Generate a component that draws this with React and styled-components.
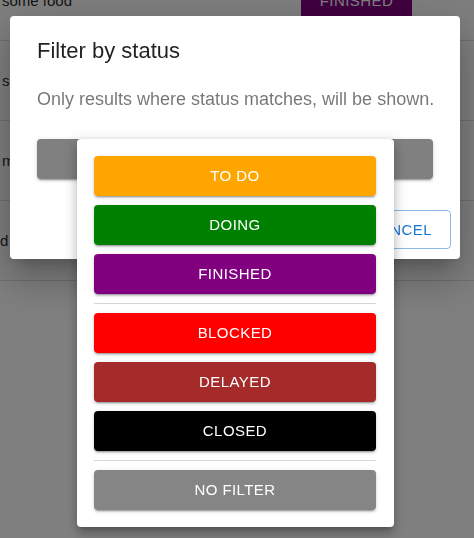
//IMPORTS
import React from 'react'
import styled, { createGlobalStyle } from 'styled-components'

//STYLE
const font = `"Liberation Sans", Arial, Helvetica, sans-serif`

const GlobalStyle = createGlobalStyle`
  html, body{
    margin: 0;
    padding: 0;
    width: 474px;
    height: 538px;
    overflow: hidden;
    background: #fff;
    font-family: ${font};
  }
`

const Page = styled.div`
  width: 474px;
  height: 538px;
  overflow: hidden;
`
const Table = styled.div`
  margin-top: -39px;
`
const Row = styled.div`
  display: flex;
  align-items: center;
  height: 80px;
  border-bottom: 1px solid #e0e0e0;
  box-sizing: border-box;
  padding-left: ${p => p.$indent}px;
  font-size: 15px;
  color: rgba(0,0,0,0.87);
`
const RowText = styled.div`
  flex: 1;
  white-space: nowrap;
`
const Chip = styled.div`
  width: 111px;
  height: 30px;
  margin-right: 62px;
  display: flex;
  align-items: center;
  justify-content: center;
  background: ${p => p.$bg};
  color: #fff;
  font-size: 15px;
  letter-spacing: 0.43px;
`

const Backdrop = styled.div`
  position: fixed;
  inset: 0;
  background: rgba(0,0,0,0.5);
  display: flex;
  align-items: flex-start;
  padding: 16px 0 0 10px;
`
const Dialog = styled.div`
  width: 450px;
  box-sizing: border-box;
  background: #fff;
  border-radius: 4px;
  padding: 19px 9px 10px 27px;
  box-shadow: 0px 11px 15px -7px rgba(0,0,0,0.2), 0px 24px 38px 3px rgba(0,0,0,0.14), 0px 9px 46px 8px rgba(0,0,0,0.12);
`
const Title = styled.h2`
  margin: 0;
  font-size: 22px;
  font-weight: 400;
  line-height: 32px;
  color: rgba(0,0,0,0.87);
`
const Subtitle = styled.p`
  margin: 19px 0 0;
  font-size: 18px;
  line-height: 27px;
  white-space: nowrap;
  color: rgba(0,0,0,0.54);
`
const SelectButton = styled.div`
  margin: 26px 18px 0 0;
  height: 40px;
  border-radius: 4px;
  background: #808080;
  box-shadow: 0px 3px 1px -2px rgba(0,0,0,0.2), 0px 2px 2px 0px rgba(0,0,0,0.14), 0px 1px 5px 0px rgba(0,0,0,0.12);
`
const Actions = styled.div`
  display: flex;
  justify-content: flex-end;
  margin-top: 31px;
`
const OutlinedButton = styled.button`
  height: 39px;
  padding: 0 18px;
  background: transparent;
  border: 1px solid rgba(25,118,210,0.5);
  border-radius: 4px;
  color: #1976d2;
  font-family: ${font};
  font-size: 15px;
  letter-spacing: 0.43px;
  text-transform: uppercase;
`

const Menu = styled.div`
  position: fixed;
  left: 77px;
  top: 139px;
  width: 317px;
  box-sizing: border-box;
  padding: 17px 18px 17px 17px;
  background: #fff;
  border-radius: 4px;
  display: flex;
  flex-direction: column;
  gap: 9px;
  box-shadow: 0px 5px 5px -3px rgba(0,0,0,0.2), 0px 8px 10px 1px rgba(0,0,0,0.14), 0px 3px 14px 2px rgba(0,0,0,0.12);
`
const StatusButton = styled.button`
  height: 40px;
  padding: 0 0 2px;
  border: none;
  border-radius: 4px;
  background: ${p => p.$bg};
  color: #fff;
  font-family: ${font};
  font-size: 15px;
  letter-spacing: 0.43px;
  text-transform: uppercase;
  box-shadow: 0px 3px 1px -2px rgba(0,0,0,0.2), 0px 2px 2px 0px rgba(0,0,0,0.14), 0px 1px 5px 0px rgba(0,0,0,0.12);
`
const Divider = styled.hr`
  margin: 0;
  border: none;
  height: 1px;
  background: #d6d6d6;
`

//DATA
const rows = [
  { text: 'some food', indent: 2, chip: { label: 'FINISHED', bg: '#800080' } },
  { text: 's', indent: 2 },
  { text: 'm', indent: 2 },
  { text: 'd', indent: 0 },
]

const groups = [
  [
    { label: 'To do', bg: '#ffa500' },
    { label: 'Doing', bg: '#008000' },
    { label: 'Finished', bg: '#800080' },
  ],
  [
    { label: 'Blocked', bg: '#ff0000' },
    { label: 'Delayed', bg: '#a52a2a' },
    { label: 'Closed', bg: '#000000' },
  ],
  [
    { label: 'No filter', bg: '#858585' },
  ],
]

//MAIN COMPONENT
function App() {
  return (
    <>
      <GlobalStyle />
      <Page>
        <Table>
          {rows.map((r, i) => (
            <Row key={i} $indent={r.indent}>
              <RowText>{r.text}</RowText>
              {r.chip && <Chip $bg={r.chip.bg}>{r.chip.label}</Chip>}
            </Row>
          ))}
        </Table>
      </Page>

      <Backdrop>
        <Dialog>
          <Title>Filter by status</Title>
          <Subtitle>Only results where status matches, will be shown.</Subtitle>
          <SelectButton />
          <Actions>
            <OutlinedButton>Cancel</OutlinedButton>
          </Actions>
        </Dialog>
      </Backdrop>

      <Menu>
        {groups.map((g, gi) => (
          <React.Fragment key={gi}>
            {gi > 0 && <Divider />}
            {g.map(s => (
              <StatusButton key={s.label} $bg={s.bg}>{s.label}</StatusButton>
            ))}
          </React.Fragment>
        ))}
      </Menu>
    </>
  )
}
export default App;
